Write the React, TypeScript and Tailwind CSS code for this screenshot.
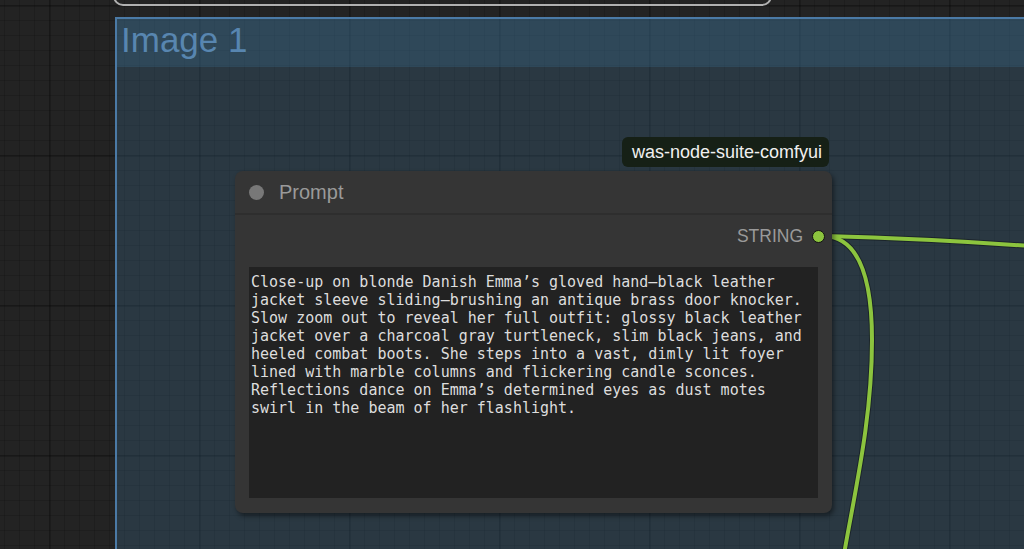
const promptText = [
  "Close-up on blonde Danish Emma’s gloved hand—black leather",
  "jacket sleeve sliding—brushing an antique brass door knocker.",
  "Slow zoom out to reveal her full outfit: glossy black leather",
  "jacket over a charcoal gray turtleneck, slim black jeans, and",
  "heeled combat boots. She steps into a vast, dimly lit foyer",
  "lined with marble columns and flickering candle sconces.",
  "Reflections dance on Emma’s determined eyes as dust motes",
  "swirl in the beam of her flashlight.",
].join("\n")

export default function App() {
  return (
    <div className="relative w-[1024px] h-[549px] overflow-hidden font-['Liberation_Sans',Arial,sans-serif] bg-[#232323] bg-[linear-gradient(to_right,rgba(0,0,0,0.2)_2px,transparent_2px),linear-gradient(to_bottom,rgba(0,0,0,0.2)_2px,transparent_2px),linear-gradient(to_right,rgba(0,0,0,0.13)_1px,transparent_1px),linear-gradient(to_bottom,rgba(0,0,0,0.13)_1px,transparent_1px)] bg-[size:150px_150px,150px_150px,15px_15px,15px_15px] bg-[position:49px_5px,49px_5px,4px_5px,4px_5px]">
      {/* node above, only its bottom edge shows */}
      <div className="absolute left-[113px] top-[-40px] w-[659px] h-[46px] rounded-[10px] border-2 border-[#b0b0b0]"></div>

      {/* group "Image 1" */}
      <div className="absolute left-[115px] top-[17px] w-[940px] h-[560px] border-2 border-[#4b7aa6] bg-[#3f789e]/25">
        <div className="h-[48px] bg-[#3f789e]/25 pl-[4px] pt-[3px]">
          <span className="text-[35px] leading-none text-[#5886b0]">Image 1</span>
        </div>
      </div>

      {/* links */}
      <svg className="absolute left-0 top-0 pointer-events-none" width="1024" height="549">
        <path d="M825 236 C900 238, 960 241, 1030 246" fill="none" stroke="rgba(0,0,0,0.35)" strokeWidth="6" />
        <path d="M825 236 C860 238, 872 280, 872 340 C872 420, 855 490, 843 560" fill="none" stroke="rgba(0,0,0,0.35)" strokeWidth="6" />
        <path d="M825 236 C900 238, 960 241, 1030 246" fill="none" stroke="#8cc43e" strokeWidth="4" />
        <path d="M825 236 C860 238, 872 280, 872 340 C872 420, 855 490, 843 560" fill="none" stroke="#8cc43e" strokeWidth="4" />
      </svg>

      {/* source badge */}
      <div className="absolute left-[622px] top-[137px] h-[30px] w-[207px] rounded-[6px] bg-[#162016] flex items-center pl-[10px] text-[18px] text-[#f0f0f0]">
        was-node-suite-comfyui
      </div>

      {/* Prompt node */}
      <div className="absolute left-[235px] top-[171px] w-[597px] h-[342px] rounded-[8px] bg-[#353535] shadow-[2px_3px_5px_rgba(0,0,0,0.45)] flex flex-col">
        <div className="h-[44px] flex items-center pl-[14px] gap-[15px] border-b-2 border-[#2e2e2e]">
          <div className="w-[15px] h-[15px] rounded-full bg-[#787878]"></div>
          <span className="text-[20px] text-[#9a9a9a]">Prompt</span>
        </div>
        <div className="h-[42px] flex items-center justify-end gap-[9px] pr-[7px]">
          <span className="text-[17.5px] text-[#9a9a9a]">STRING</span>
          <div className="w-[13px] h-[13px] rounded-full bg-[#8cc43e] border-[1.5px] border-[#111]"></div>
        </div>
        <div className="mx-[14px] mt-[10px] h-[231px] bg-[#222222] pl-[2px] pt-[6px] whitespace-pre font-['DejaVu_Sans_Mono',monospace] text-[15px] leading-[18px] text-[#dddddd]">
          {promptText}
        </div>
      </div>
    </div>
  )
}
